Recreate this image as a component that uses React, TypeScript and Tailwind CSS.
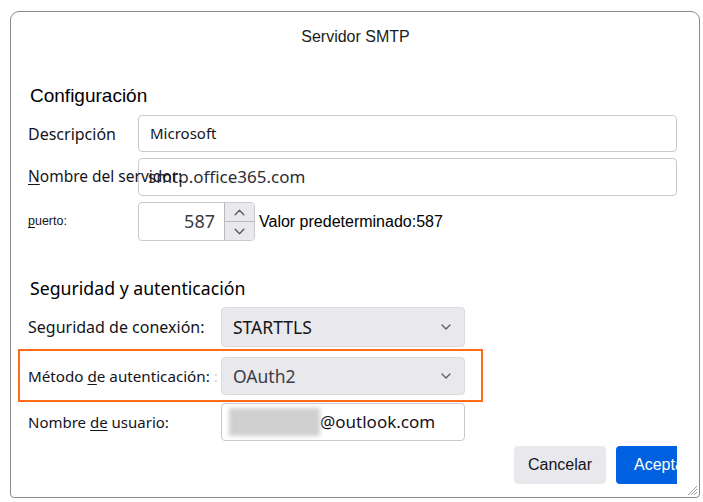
import React from 'react';

const ui = { fontFamily: '"Noto Sans", "Open Sans", sans-serif' };
const arial = { fontFamily: '"Liberation Sans", Arial, sans-serif' };

const Chevron = ({ up = false, size = 12 }: { up?: boolean; size?: number }) => (
    <svg width={size} height={size} viewBox="0 0 12 12" fill="none">
        <path
            d={up ? 'M2 8 L6 4 L10 8' : 'M2 4 L6 8 L10 4'}
            stroke="#5b5b66"
            strokeWidth="1.3"
            strokeLinecap="round"
            strokeLinejoin="round"
        />
    </svg>
);

const Select = ({ value, muted = false }: { value: string; muted?: boolean }) => (
    <div className="w-[244px] h-full rounded-[4px] bg-[#e9e9ed] border border-[#dcdce0] flex items-center justify-between pl-[11px] pr-[12px]">
        <span className={`text-[17.5px] ${muted ? 'text-[#3d3d45]' : 'text-[#15141a]'}`} style={ui}>
            {value}
        </span>
        <Chevron />
    </div>
);

const App = () => {
    return (
        <div className="w-[703px] h-[502px] bg-white pt-[11px] pl-[10px]">
            <div className="relative w-[690px] h-[487px] border border-[#8c8c8c] rounded-t-[9px] rounded-b-[4px] flex flex-col overflow-hidden">
                <div className="h-[50px] flex items-center justify-center pl-[1px] text-[16px] text-[#1b1b1b]" style={arial}>
                    Servidor SMTP
                </div>

                <div className="mt-[22px] h-[24px] leading-[24px] ml-[19px] text-[19px] text-black" style={arial}>
                    Configuración
                </div>

                <div className="mt-[7px] h-[37px] ml-[17px] flex items-center">
                    <div className="w-[110px] text-[16px] text-[#15141a]" style={ui}>Descripción</div>
                    <div className="w-[539px] h-full border border-[#c9c9cf] rounded-[4px] flex items-center pl-[11px] text-[15px] text-[#15141a]" style={ui}>
                        Microsoft
                    </div>
                </div>

                <div className="mt-[6px] h-[38px] ml-[17px] flex items-center">
                    <div className="w-[110px] relative z-10 whitespace-nowrap text-[15.5px] text-[#15141a]" style={ui}>
                        <span className="underline underline-offset-2">N</span>ombre del servidor:
                    </div>
                    <div className="w-[539px] h-full border border-[#c9c9cf] rounded-[4px] flex items-center pl-[9px] text-[17px] text-[#2e2e34]" style={ui}>
                        smtp.office365.com
                    </div>
                </div>

                <div className="mt-[6px] h-[39px] ml-[17px] flex items-center">
                    <div className="w-[110px] text-[12.5px] text-[#15141a]" style={arial}>
                        <span className="underline underline-offset-2">p</span>uerto:
                    </div>
                    <div className="h-full flex border border-[#c9c9cf] rounded-[4px] overflow-hidden">
                        <div className="w-[85px] h-full flex items-center justify-end pr-[9px] text-[18px] text-[#3a3a40]" style={ui}>
                            587
                        </div>
                        <div className="w-[30px] h-full flex flex-col border-l border-[#b9b9bf]">
                            <div className="flex-1 bg-[#e9e9ed] flex items-center justify-center border-b border-[#b9b9bf]">
                                <Chevron up size={13} />
                            </div>
                            <div className="flex-1 bg-[#e9e9ed] flex items-center justify-center">
                                <Chevron size={13} />
                            </div>
                        </div>
                    </div>
                    <div className="ml-[4px] text-[16px] text-black" style={arial}>
                        Valor predeterminado:587
                    </div>
                </div>

                <div className="mt-[35px] h-[24px] leading-[24px] ml-[19px] text-[17.7px] text-black" style={ui}>
                    Seguridad y autenticación
                </div>

                <div className="mt-[7px] h-[40px] ml-[17px] flex items-center">
                    <div className="w-[193px] text-[16px] text-[#15141a]" style={ui}>Seguridad de conexión:</div>
                    <Select value="STARTTLS" />
                </div>

                <div className="mt-[2px] h-[53px] ml-[7px] w-[465px] border-2 border-[#ff6b17] pl-[8px] pt-[6px] pb-[5px] flex items-center">
                    <div className="w-[193px] h-full flex items-center whitespace-nowrap text-[15.2px] text-[#15141a]" style={ui}>
                        Método&nbsp;<span className="underline underline-offset-2">d</span>e autenticación:
                        <span className="ml-[4px] text-[#d4d4d8]">:</span>
                    </div>
                    <Select value="OAuth2" muted />
                </div>

                <div className="mt-[1px] h-[38px] ml-[17px] flex items-center">
                    <div className="w-[193px] text-[15px] text-[#15141a]" style={ui}>
                        Nombre <span className="underline underline-offset-2">de</span> usuario:
                    </div>
                    <div className="w-[244px] h-full border border-[#c9c9cf] rounded-[4px] flex items-center pl-[7px] text-[17px] text-[#15141a]" style={ui}>
                        <div className="w-[91px] h-[28px] bg-[#cfcfcf] blur-[2px]" />
                        <span>@outlook.com</span>
                    </div>
                </div>

                <div className="mt-[5px] h-[38px] flex justify-start pl-[503px] gap-[10px]">
                    <div className="w-[92px] h-full rounded-[4px] bg-[#e9e9ed] flex items-center justify-center text-[16px] text-[#15141a]" style={arial}>
                        Cancelar
                    </div>
                    <div className="w-[61px] h-full rounded-l-[4px] bg-[#0061e0] overflow-hidden whitespace-nowrap flex items-center pl-[18px] text-[16px] text-white" style={arial}>
                        Aceptar
                    </div>
                </div>

                <svg className="absolute right-[1px] bottom-[1px]" width="13" height="13" viewBox="0 0 13 13">
                    <path d="M12 3 L3 12 M12 6 L6 12 M12 9 L9 12" stroke="#9a9a9a" strokeWidth="1" />
                </svg>
            </div>
        </div>
    );
};

export default App;
